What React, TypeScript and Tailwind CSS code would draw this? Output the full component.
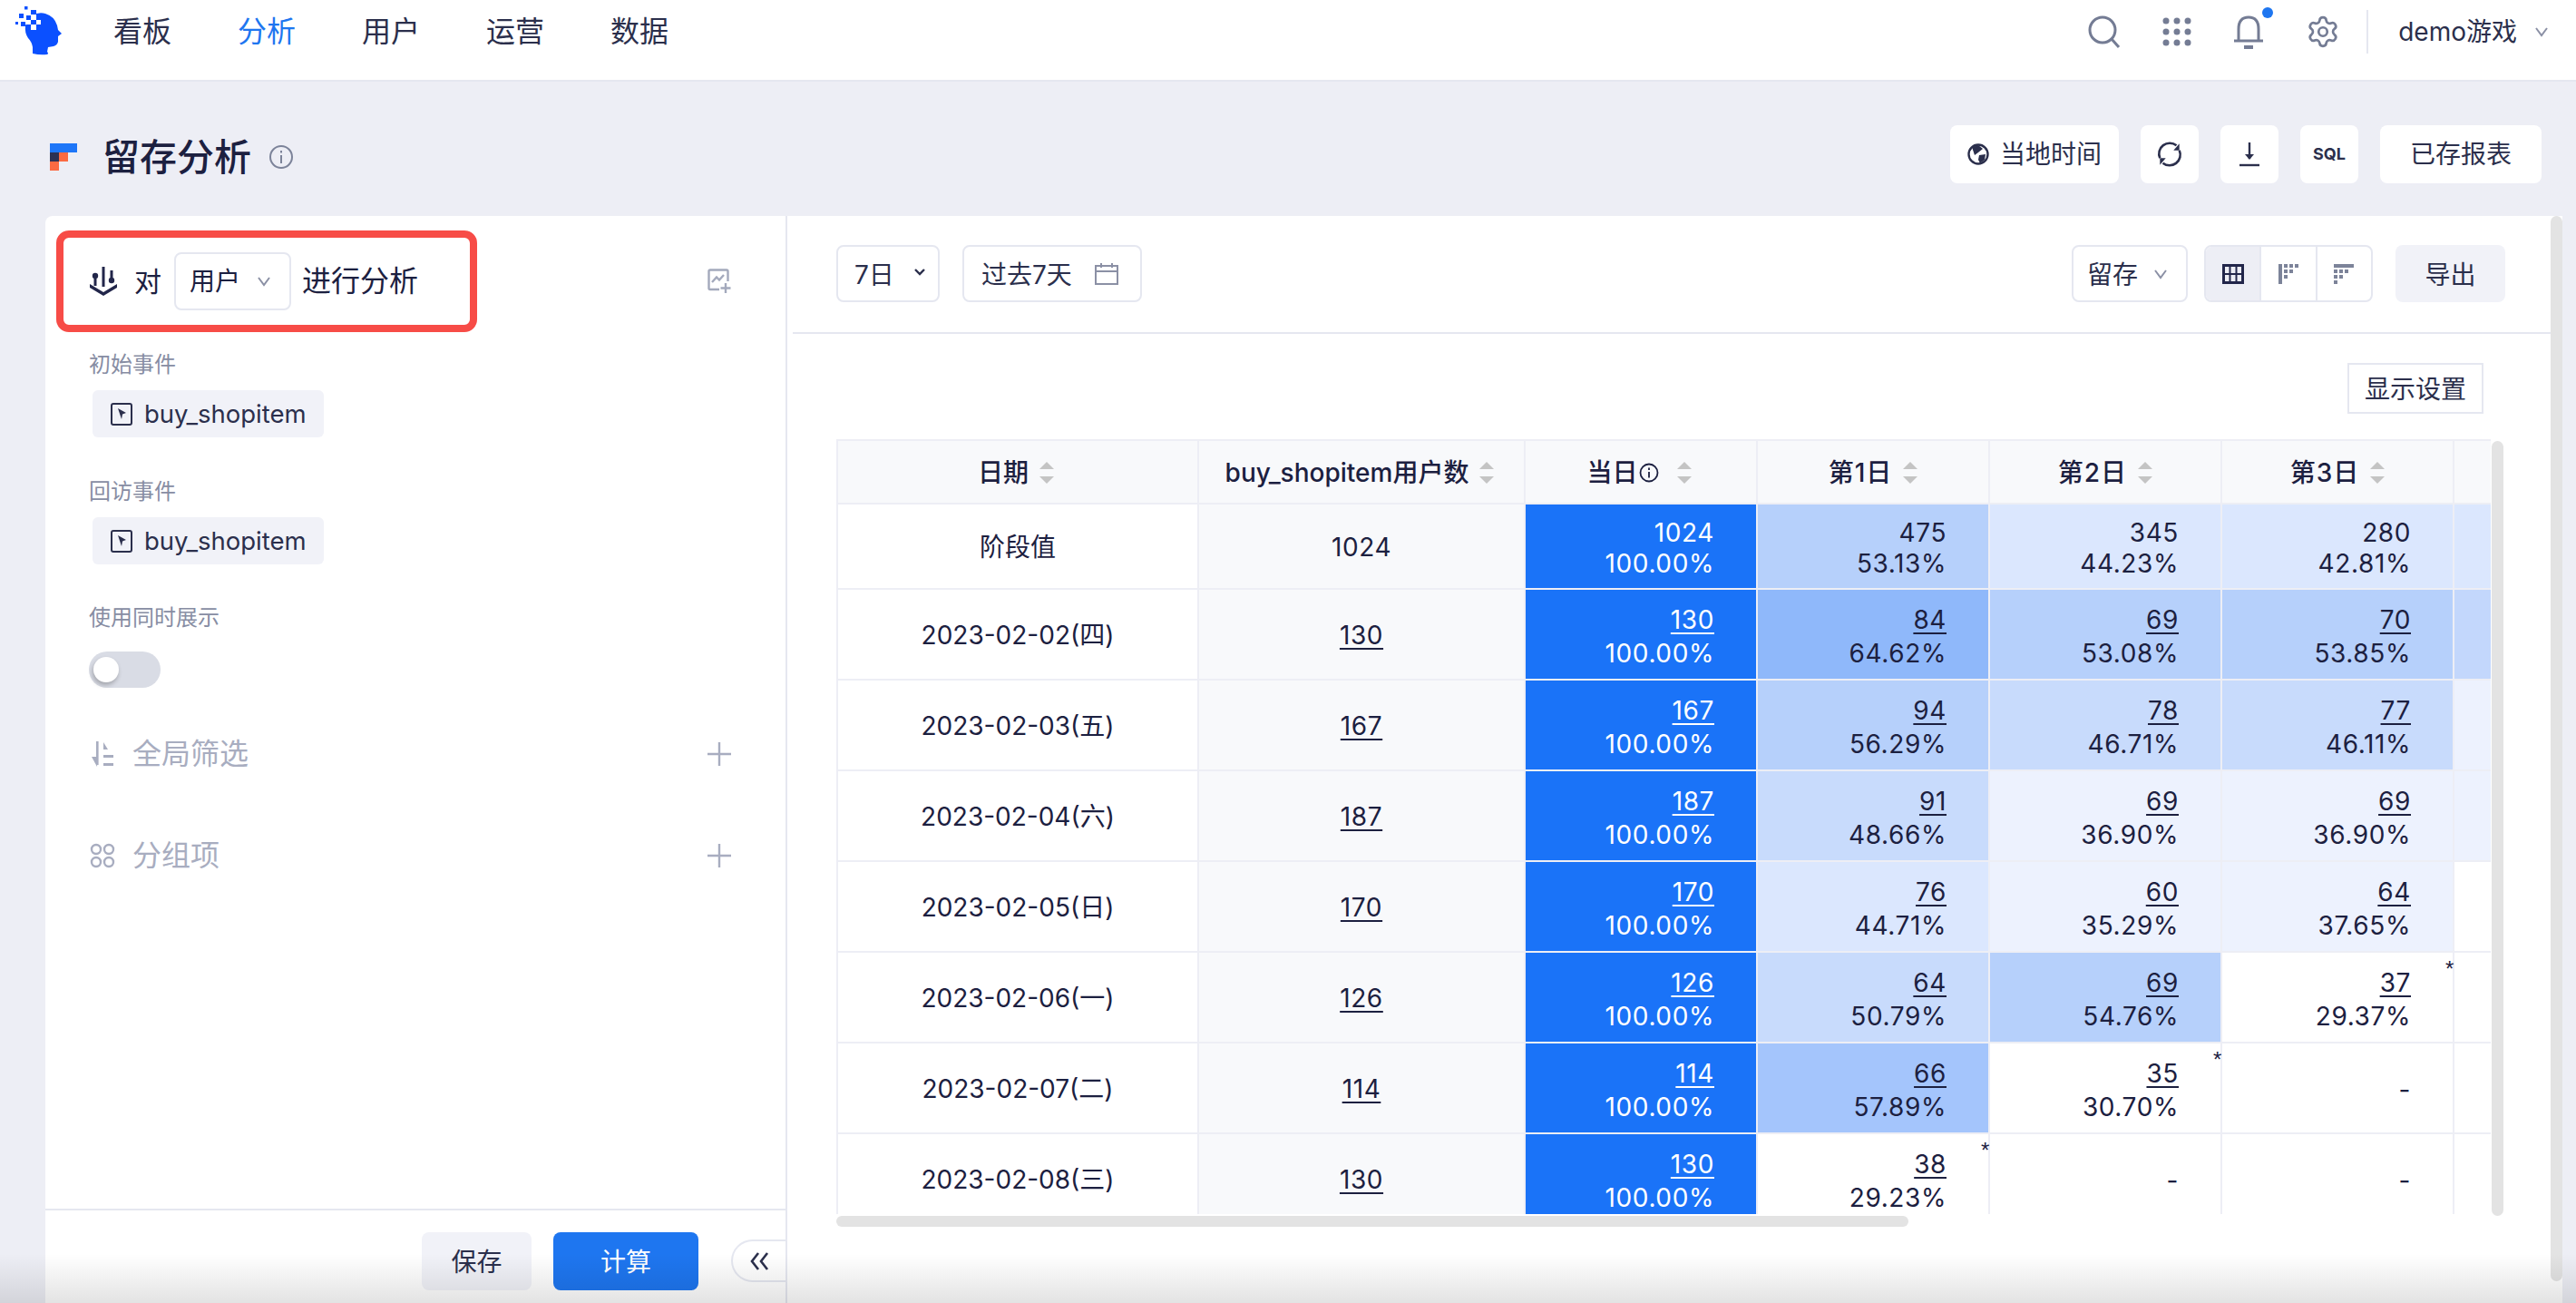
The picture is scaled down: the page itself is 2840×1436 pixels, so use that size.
import React from "react";
import { Settings } from "lucide-react";

const Chevron = ({ size = 16, color = "#8b90a5", sw = 2 }: { size?: number; color?: string; sw?: number }) => (
  <svg width={size} height={size * 0.75} viewBox="0 0 16 12" fill="none" stroke={color} strokeWidth={sw}>
    <path d="M2 2 L8 10 L14 2" />
  </svg>
);

const Logo = () => (
  <svg width="80" height="70" viewBox="0 0 80 70" className="shrink-0 ml-[10px]">
    <path
      fill="#0b50ff"
      d="M24 17 Q33 13 40 15 Q50 18 53 28 L54 33 L58 37 L54 40 L54 46 Q53 50 49 51 L43 52 L42 57 Q44 59 42 60 Q34 61 26 59 L26 52 Q25 46 21 42 Q17 36 18 28 Z"
    />
    <rect x="17" y="7" width="3.5" height="3.5" fill="#0b50ff" />
    <rect x="11" y="15" width="5" height="5" fill="#0b50ff" />
    <rect x="7" y="24" width="3" height="3" fill="#0b50ff" />
    <rect x="13" y="24" width="5" height="5" fill="#0b50ff" />
    <rect x="19" y="17" width="5" height="5" fill="#0b50ff" />
    <rect x="24" y="11" width="6" height="5" fill="#0b50ff" />
    <rect x="24" y="16" width="6" height="6" fill="#fff" />
    <rect x="30" y="22" width="5" height="5" fill="#fff" />
    <rect x="24" y="27" width="6" height="6" fill="#fff" />
    <rect x="18" y="22" width="6" height="5" fill="#fff" />
    <rect x="24" y="22" width="6" height="5" fill="#0b50ff" />
  </svg>
);

const navs = ["看板", "分析", "用户", "运营", "数据"];

const TopBar = () => (
  <div className="flex h-[90px] shrink-0 items-center border-b-2 border-[#e5e7f0] bg-white pb-[18px]">
    <div className="w-[125px] shrink-0">
      <Logo />
    </div>
    <div className="flex gap-[73px]">
      {navs.map((n, i) => (
        <span key={n} className={`text-[32px] leading-[40px] ${i === 1 ? "text-[#1e76f0]" : "text-[#2b2f4c]"}`}>
          {n}
        </span>
      ))}
    </div>
    <div className="ml-auto flex items-center">
      <svg width="36" height="36" viewBox="0 0 36 36" fill="none" stroke="#747c94" strokeWidth="3" className="mr-[46px]">
        <circle cx="16" cy="16" r="14" />
        <path d="M26 26 L34 35" />
      </svg>
      <svg width="32" height="32" viewBox="0 0 32 32" fill="#747c94" className="mr-[46px]">
        {[4, 16, 28].map((y) =>
          [4, 16, 28].map((x) => <circle key={`${x}-${y}`} cx={x} cy={y} r="3.5" />)
        )}
      </svg>
      <div className="relative mr-[46px] h-[36px] w-[34px]">
        <svg width="34" height="38" viewBox="0 0 34 38" fill="none" stroke="#747c94" strokeWidth="3">
          <path d="M6 28 V15 Q6 2 17 2 Q28 2 28 15 V28" />
          <path d="M1 28 H33" />
          <path d="M12 35 H22" strokeWidth="4" />
        </svg>
        <span className="absolute -right-[10px] -top-[9px] h-[12px] w-[12px] rounded-full bg-[#1e76f0]" />
      </div>
      <Settings size={38} color="#747c94" strokeWidth={1.7} className="mr-[29px]" />
      <div className="mr-[33px] h-[48px] w-[2px] bg-[#e5e7f0]" />
      <span className="mr-[19px] text-[28px] leading-[36px] text-[#2b2f4c]">demo游戏</span>
      <div className="mr-[30px]">
        <Chevron />
      </div>
    </div>
  </div>
);

const HeadBtn = ({ children, className = "" }: { children: React.ReactNode; className?: string }) => (
  <div className={`flex h-[64px] items-center justify-center rounded-[8px] bg-white text-[28px] text-[#2b2f4c] ${className}`}>
    {children}
  </div>
);

const PageHeader = () => (
  <div className="flex h-[148px] shrink-0 items-center pl-[55px] pr-[38px] pt-[12px]">
    <div className="flex items-center pt-[5px]">
      <svg width="30" height="30" viewBox="0 0 30 30" className="mr-[28px]">
        <rect x="0" y="0" width="30" height="10" fill="#1e76f8" />
        <rect x="0" y="10" width="10" height="10" fill="#2c3154" />
        <rect x="10" y="10" width="10" height="10" fill="#fb6a42" />
        <rect x="0" y="20" width="10" height="10" fill="#fb6a42" />
      </svg>
      <span className="text-[41px] font-medium leading-[48px] text-[#1c2040]">留存分析</span>
      <svg width="26" height="26" viewBox="0 0 26 26" fill="none" stroke="#7c8399" strokeWidth="2" className="ml-[20px]">
        <circle cx="13" cy="13" r="12" />
        <path d="M13 11 V20" />
        <path d="M13 6 V8.5" />
      </svg>
    </div>
    <div className="ml-auto flex gap-[24px]">
      <HeadBtn className="w-[186px]">
        <svg width="24" height="24" viewBox="0 0 24 24" className="mr-[12px]">
          <circle cx="12" cy="12" r="10.5" fill="none" stroke="#2b2f4c" strokeWidth="2.4" />
          <path fill="#2b2f4c" d="M5 4 L12 2 L17 6 L12 10 L8 13 Z M13 13 L20 12 L19 18 L14 22 L12 18 Z" />
        </svg>
        当地时间
      </HeadBtn>
      <HeadBtn className="w-[64px]">
        <svg width="30" height="30" viewBox="0 0 28 28" fill="none" stroke="#2b2f4c" strokeWidth="2.4">
          <path d="M4 18 A11 11 0 0 1 21 5" />
          <path d="M24 10 A11 11 0 0 1 7 23" />
          <path d="M24 3 V10 H18" fill="#2b2f4c" stroke="none" />
          <path d="M4 25 V18 H10" fill="#2b2f4c" stroke="none" />
        </svg>
      </HeadBtn>
      <HeadBtn className="w-[64px]">
        <svg width="24" height="28" viewBox="0 0 24 28" fill="none" stroke="#2b2f4c" strokeWidth="2.4">
          <path d="M12 1 V19" />
          <path d="M7 14 L12 20 L17 14" fill="#2b2f4c" stroke="none" />
          <path d="M1 26 H23" />
        </svg>
      </HeadBtn>
      <HeadBtn className="w-[64px]">
        <span className="text-[18px] font-bold leading-none">SQL</span>
      </HeadBtn>
      <HeadBtn className="w-[178px]">已存报表</HeadBtn>
    </div>
  </div>
);

const Chip = () => (
  <div className="ml-[4px] mt-[12px] flex h-[52px] w-[255px] items-center rounded-[6px] bg-[#f1f2f8] pl-[20px]">
    <svg width="24" height="25" viewBox="0 0 24 25" fill="none" className="mr-[13px] shrink-0">
      <rect x="1" y="1" width="22" height="23" rx="2" stroke="#2b2f4c" strokeWidth="2" />
      <path d="M8 6 L17 11 L13 12.5 L12 18 Z" fill="#2b2f4c" />
    </svg>
    <span className="text-[27.5px] leading-[36px] text-[#2b2f4c]">buy_shopitem</span>
  </div>
);

const Label = ({ children, className = "" }: { children: React.ReactNode; className?: string }) => (
  <div className={`text-[24px] leading-[32px] text-[#878da3] ${className}`}>{children}</div>
);

const Plus = () => (
  <svg width="26" height="26" viewBox="0 0 26 26" stroke="#a8adc0" strokeWidth="2.4" className="ml-auto mr-[60px] -mt-[1px]">
    <path d="M13 0 V26 M0 13 H26" />
  </svg>
);

const Sidebar = () => (
  <div className="flex w-[818px] shrink-0 flex-col rounded-tl-[8px] border-r-2 border-[#e5e7f0] bg-white">
    <div className="ml-[12px] mt-[16px] flex items-center">
      <div className="flex h-[112px] w-[464px] items-center rounded-[14px] border-[8px] border-[#f74c47] pl-[29px]">
        <svg width="30" height="32" viewBox="0 0 30 32" fill="#22264a" className="mr-[19px] shrink-0">
          <rect x="13.5" y="0" width="3" height="22" />
          <circle cx="6" cy="10" r="3.2" />
          <circle cx="24" cy="15" r="3.2" />
          <rect x="4.5" y="13" width="3" height="8" />
          <rect x="22.5" y="4" width="3" height="8" />
          <path d="M0 19 L15 28 L30 19 V23 L15 32 L0 23 Z" />
        </svg>
        <span className="text-[30px] leading-[36px] text-[#1c2040]">对</span>
        <div className="ml-[14px] flex h-[64px] w-[129px] shrink-0 items-center rounded-[8px] border-2 border-[#e5e7f0] pl-[15px]">
          <span className="text-[28px] text-[#1c2040]">用户</span>
          <div className="ml-[18px]">
            <Chevron />
          </div>
        </div>
        <span className="ml-[12px] whitespace-nowrap text-[32px] leading-[40px] text-[#1c2040]">进行分析</span>
      </div>
      <svg width="26" height="28" viewBox="0 0 26 28" fill="none" stroke="#a3a9bc" strokeWidth="2.4" className="ml-auto mr-[60px]">
        <path d="M13 23 H3 Q1.5 23 1.5 21.5 V3 Q1.5 1.5 3 1.5 H21 Q22.5 1.5 22.5 3 V14" />
        <path d="M5 15 L10 9.5 L13 12.5 L18 7" />
        <path d="M20 16 V27 M14.5 21.5 H25.5" />
      </svg>
    </div>
    <div className="mt-[20px] pl-[48px]">
      <Label>初始事件</Label>
      <Chip />
      <Label className="mt-[44px]">回访事件</Label>
      <Chip />
      <Label className="mt-[43px]">使用同时展示</Label>
      <div className="mt-[21px] flex h-[40px] w-[79px] items-center rounded-full bg-[#d9dce5] pl-[5px]">
        <span className="h-[28px] w-[28px] rounded-full bg-white shadow-[-1px_3px_5px_rgba(0,0,0,0.25)]" />
      </div>
      <div className="mt-[53px] flex h-[40px] items-center text-[#a8adc0]">
        <svg width="26" height="28" viewBox="0 0 26 28" fill="#a8adc0" className="ml-[3px] mr-[19px] shrink-0">
          <rect x="5" y="0" width="2.6" height="26" />
          <path d="M0 17 L6 28 L7 17 Z" />
          <path d="M13 1 L18 9 L13 9 Z" />
          <rect x="13" y="15" width="11" height="3" />
          <rect x="13" y="24" width="11" height="3" />
        </svg>
        <span className="text-[32px] leading-[40px]">全局筛选</span>
        <Plus />
      </div>
      <div className="mt-[72px] flex h-[40px] items-center text-[#a8adc0]">
        <svg width="28" height="28" viewBox="0 0 28 28" fill="none" stroke="#a8adc0" strokeWidth="2.4" className="ml-[1px] mr-[19px] shrink-0">
          <circle cx="7" cy="7" r="5" />
          <circle cx="21" cy="7" r="5" />
          <circle cx="7" cy="21" r="5" />
          <circle cx="21" cy="21" r="5" />
        </svg>
        <span className="text-[32px] leading-[40px]">分组项</span>
        <Plus />
      </div>
    </div>
    <div className="flex-1" />
    <div className="flex h-[104px] shrink-0 items-start justify-end border-t-2 border-[#e5e7f0] pt-[24px]">
      <div className="flex h-[64px] w-[121px] items-center justify-center rounded-[8px] bg-[#f1f2f8] pt-[2px] text-[28px] text-[#2b2f4c]">保存</div>
      <div className="ml-[24px] flex h-[64px] w-[160px] items-center justify-center rounded-[8px] bg-[#1e76f0] pt-[2px] text-[28px] text-white">计算</div>
      <div className="ml-[36px] mt-[8px] flex h-[47px] w-[60px] items-center justify-center rounded-l-full border-2 border-r-0 border-[#e5e7f0] bg-white">
        <svg width="22" height="20" viewBox="0 0 22 20" fill="none" stroke="#2b2f4c" strokeWidth="2.6">
          <path d="M10 1 L3 10 L10 19 M20 1 L13 10 L20 19" />
        </svg>
      </div>
    </div>
  </div>
);

const Select = ({ children, w }: { children: React.ReactNode; w: string }) => (
  <div className={`flex h-[63px] items-center rounded-[8px] border-2 border-[#e5e7f0] bg-white text-[28px] text-[#2b2f4c] ${w}`}>{children}</div>
);

const Toolbar = () => (
  <div className="ml-[6px] flex h-[130px] shrink-0 items-start border-b-2 border-[#e5e7f0] pl-[48px] pr-[50px] pt-[32px]">
    <Select w="w-[114px] pl-[18px]">
      <span className="pt-[2px]">7日</span>
      <svg width="12" height="8" viewBox="0 0 12 8" fill="none" stroke="#2b2f4c" strokeWidth="2.4" className="ml-[22px] -mt-[4px]">
        <path d="M1 1 L6 6 L11 1" />
      </svg>
    </Select>
    <Select w="ml-[25px] w-[198px] pl-[19px]">
      <span className="pt-[2px]">过去7天</span>
      <svg width="26" height="24" viewBox="0 0 26 24" fill="none" stroke="#8b90a5" strokeWidth="2" className="ml-[25px]">
        <rect x="1" y="3" width="24" height="20" />
        <path d="M1 9 H25 M7 0 V5 M19 0 V5" />
      </svg>
    </Select>
    <div className="ml-auto flex">
      <Select w="w-[128px] pl-[15px]">
        <span className="pt-[2px]">留存</span>
        <div className="ml-[17px]">
          <Chevron />
        </div>
      </Select>
      <div className="ml-[18px] flex h-[63px] w-[186px] overflow-hidden rounded-[8px] border-2 border-[#e5e7f0] bg-white">
        <div className="flex flex-1 items-center justify-center bg-[#edeef5]">
          <svg width="24" height="22" viewBox="0 0 24 22" fill="none" stroke="#22264a" strokeWidth="3">
            <rect x="1.5" y="1.5" width="21" height="19" />
            <path d="M1.5 11 H22.5 M8.5 1.5 V20.5 M15.5 1.5 V20.5" strokeWidth="2" />
          </svg>
        </div>
        <div className="flex flex-1 items-center justify-center border-x-2 border-[#e5e7f0]">
          <svg width="22" height="22" viewBox="0 0 22 22" fill="#7c8399">
            <rect x="0" y="0" width="4" height="22" />
            <rect x="6" y="0" width="4" height="4" />
            <rect x="12" y="0" width="4" height="4" />
            <rect x="18" y="0" width="4" height="4" />
            <rect x="6" y="6" width="4" height="4" />
            <rect x="12" y="6" width="4" height="4" />
            <rect x="6" y="12" width="4" height="4" />
          </svg>
        </div>
        <div className="flex flex-1 items-center justify-center">
          <svg width="22" height="22" viewBox="0 0 22 22" fill="#7c8399">
            <rect x="0" y="0" width="22" height="4" />
            <rect x="0" y="6" width="4" height="4" />
            <rect x="6" y="6" width="4" height="4" />
            <rect x="12" y="6" width="4" height="4" />
            <rect x="0" y="12" width="4" height="4" />
            <rect x="6" y="12" width="4" height="4" />
            <rect x="0" y="18" width="4" height="4" />
          </svg>
        </div>
      </div>
      <div className="ml-[25px] flex h-[63px] w-[121px] items-center justify-center rounded-[8px] bg-[#f1f2f8] pt-[2px] text-[28px] text-[#2b2f4c]">导出</div>
    </div>
  </div>
);

const Sort = () => (
  <svg width="16" height="24" viewBox="0 0 16 24" fill="#c4c4c4" className="ml-[12px] shrink-0">
    <path d="M8 0 L16 8 H0 Z" />
    <path d="M0 16 H16 L8 24 Z" />
  </svg>
);

const B = "#1a73f8";
const c1 = "#dbe7fe";
const c2 = "#c8dbfc";
const c3 = "#b6d0fb";
const c4 = "#a4c5fc";
const c5 = "#8fb8fa";
const c0 = "#edf2fe";
const W = "#ffffff";

type Cell = [string, string, string, boolean?];

const rows: { date: string; users: string; plain?: boolean; cells: Cell[]; last: string }[] = [
  { date: "阶段值", users: "1024", plain: true, cells: [["1024", "100.00%", B], ["475", "53.13%", c3], ["345", "44.23%", c1], ["280", "42.81%", c1]], last: c1 },
  { date: "2023-02-02(四)", users: "130", cells: [["130", "100.00%", B], ["84", "64.62%", c5], ["69", "53.08%", c3], ["70", "53.85%", c3]], last: "#c3d7fc" },
  { date: "2023-02-03(五)", users: "167", cells: [["167", "100.00%", B], ["94", "56.29%", c3], ["78", "46.71%", c2], ["77", "46.11%", c2]], last: c0 },
  { date: "2023-02-04(六)", users: "187", cells: [["187", "100.00%", B], ["91", "48.66%", c2], ["69", "36.90%", c0], ["69", "36.90%", c0]], last: c0 },
  { date: "2023-02-05(日)", users: "170", cells: [["170", "100.00%", B], ["76", "44.71%", c1], ["60", "35.29%", c0], ["64", "37.65%", c0]], last: W },
  { date: "2023-02-06(一)", users: "126", cells: [["126", "100.00%", B], ["64", "50.79%", c2], ["69", "54.76%", c3], ["37", "29.37%", W, true]], last: W },
  { date: "2023-02-07(二)", users: "114", cells: [["114", "100.00%", B], ["66", "57.89%", c4], ["35", "30.70%", W, true], ["-", "", W]], last: W },
  { date: "2023-02-08(三)", users: "130", cells: [["130", "100.00%", B], ["38", "29.23%", W, true], ["-", "", W], ["-", "", W]], last: W },
];

const HeadCell = ({ w, children }: { w: string; children: React.ReactNode }) => (
  <div className={`flex h-full shrink-0 items-center justify-center border-r-2 border-[#edeef5] bg-[#f8f9fb] pt-[2px] text-[28px] font-medium text-[#1c2040] ${w}`}>
    {children}
  </div>
);

const DataCell = ({ cell, plain }: { cell: Cell; plain?: boolean }) => {
  const [n, p, bg, star] = cell;
  const white = bg === B;
  return (
    <div
      className={`relative flex h-full w-[256px] shrink-0 flex-col items-end justify-center border-r-2 border-[#edeef5] pr-[46px] text-[28px] tracking-[0.6px] ${plain ? "pt-[3px] leading-[34px]" : "pt-[5px] leading-[37px]"} ${white ? "text-white" : "text-[#1c2040]"}`}
      style={{ backgroundColor: bg }}
    >
      {n === "-" ? <span>-</span> : <span className={plain ? "" : "underline underline-offset-[4px]"}>{n}</span>}
      {p && <span>{p}</span>}
      {star && <span className="absolute -right-[2px] top-[6px] font-['Liberation_Sans'] text-[24px] leading-[24px] text-[#1c2040]">*</span>}
    </div>
  );
};

const Table = () => (
  <div className="ml-[54px] mt-[28px] flex">
    <div className="w-[1824px]">
      <div className="h-[854px] w-[1824px] overflow-hidden border-l-2 border-t-2 border-[#edeef5]">
        <div className="w-[2100px]">
          <div className="flex h-[70px] border-b-2 border-[#edeef5]">
            <HeadCell w="w-[398px] pr-[4px]">
              日期
              <Sort />
            </HeadCell>
            <HeadCell w="w-[360px] pr-[4px]">
              buy_shopitem用户数
              <Sort />
            </HeadCell>
            <HeadCell w="w-[256px] pr-[4px]">
              当日
              <svg width="22" height="22" viewBox="0 0 22 22" fill="none" stroke="#1c2040" strokeWidth="1.8" className="ml-[1px]">
                <circle cx="11" cy="11" r="9.5" />
                <path d="M11 10 V16.5 M11 5.5 V8" />
              </svg>
              <span className="ml-[8px]">
                <Sort />
              </span>
            </HeadCell>
            {["第1日", "第2日", "第3日"].map((t) => (
              <HeadCell key={t} w="w-[256px]">
                <span className="tracking-[1px]">{t}</span>
                <Sort />
              </HeadCell>
            ))}
            <HeadCell w="w-[256px]">{" "}</HeadCell>
          </div>
          {rows.map((r) => (
            <div key={r.date} className={`flex border-b-2 border-[#edeef5] ${r.plain ? "h-[94px]" : "h-[100px]"}`}>
              <div className="flex h-full w-[398px] shrink-0 items-center justify-center border-r-2 border-[#edeef5] bg-white pt-[2px] text-[28px] text-[#1c2040]">
                {r.date}
              </div>
              <div className="flex h-full w-[360px] shrink-0 items-center justify-center border-r-2 border-[#edeef5] bg-[#f8f9fb] pt-[2px] text-[28px] tracking-[0.6px] text-[#1c2040]">
                <span className={r.plain ? "" : "underline underline-offset-[4px]"}>{r.users}</span>
              </div>
              {r.cells.map((c, i) => (
                <DataCell key={i} cell={c} plain={r.plain} />
              ))}
              <div className="h-full w-[256px] shrink-0" style={{ backgroundColor: r.last }} />
            </div>
          ))}
        </div>
      </div>
      <div className="mt-[2px] h-[12px] w-[1182px] rounded-full bg-[#e3e3e3]" />
    </div>
    <div className="ml-[1px] mt-[2px] h-[854px] w-[13px] rounded-full bg-[#e3e3e3]" />
  </div>
);

const Panel = () => (
  <div className="flex h-full flex-1 bg-white">
    <div className="flex w-[1944px] shrink-0 flex-col">
      <Toolbar />
      <div className="mr-[74px] mt-[32px] flex h-[56px] w-[150px] items-center justify-center self-end border-2 border-[#e5e7f0] pt-[2px] text-[28px] text-[#2b2f4c]">
        显示设置
      </div>
      <Table />
    </div>
    <div className="h-[1174px] w-[13px] rounded-full bg-[#e3e3e3]" />
  </div>
);

export default function App() {
  return (
    <div className="relative flex h-[1436px] w-[2840px] flex-col overflow-hidden bg-[#edeef5] font-[Inter,'Noto_Sans_CJK_SC',sans-serif]">
      <TopBar />
      <PageHeader />
      <div className="ml-[50px] flex h-[1198px] w-[2775px]">
        <Sidebar />
        <Panel />
      </div>
      <div className="pointer-events-none absolute inset-x-0 bottom-0 h-[54px] bg-linear-to-t from-[#0000001c] to-transparent" />
    </div>
  );
}
